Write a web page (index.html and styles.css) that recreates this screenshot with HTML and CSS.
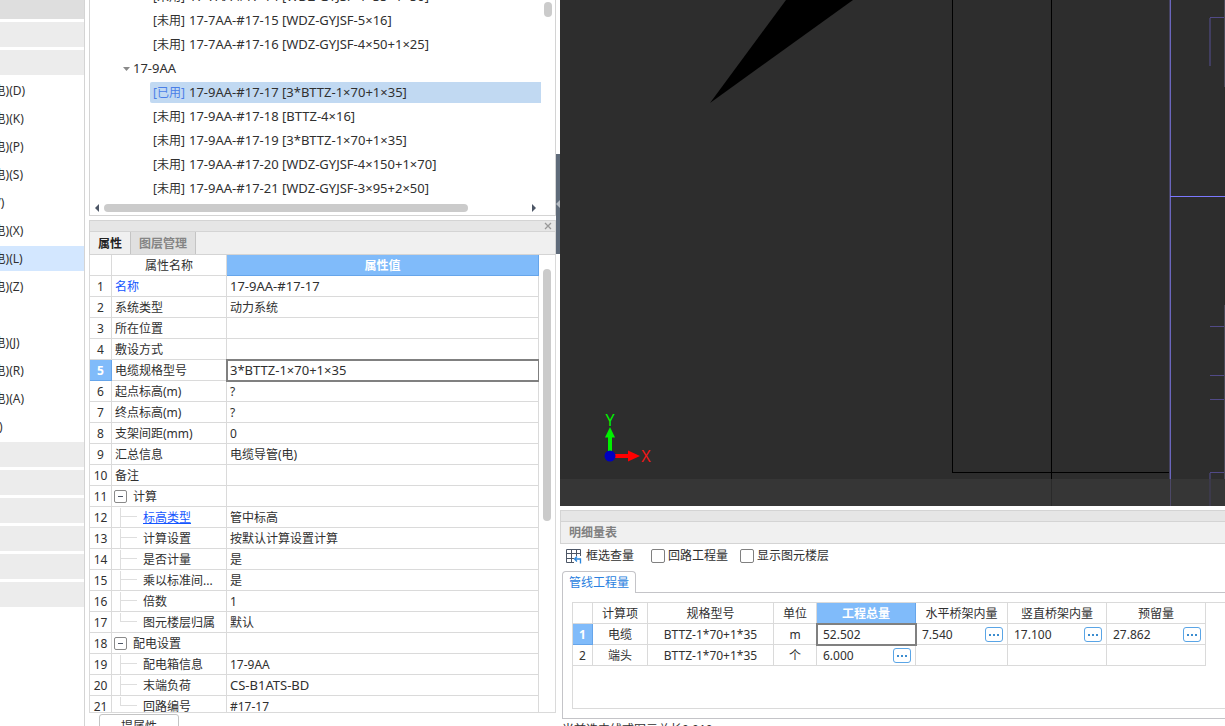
FILE: index.html
```
<!DOCTYPE html>
<html lang="zh-CN">
<head>
<meta charset="utf-8">
<title>明细量表</title>
<link rel="stylesheet" href="styles.css">
</head>
<body>
<div class="app">
  <nav class="sidebar">
    <ul class="nav-list">
      <li class="group pressed"></li>
      <li class="group"></li>
      <li class="group"></li>
      <li>(电)(D)</li>
      <li>(电)(K)</li>
      <li>(电)(P)</li>
      <li>(电)(S)</li>
      <li class="short">(V)</li>
      <li>(电)(X)</li>
      <li class="selected">(电)(L)</li>
      <li>(电)(Z)</li>
      <li></li>
      <li>(电)(J)</li>
      <li>(电)(R)</li>
      <li>(电)(A)</li>
      <li class="short tight">(F)</li>
      <li class="group"></li>
      <li class="group"></li>
      <li class="group"></li>
      <li class="group"></li>
      <li class="group"></li>
      <li class="group"></li>
    </ul>
  </nav>

  <div class="middle">
    <section class="tree-panel">
      <div class="tree-body">
        <ul class="tree">
          <li><span class="state">[未用]</span>17-7AA-#17-14 [WDZ-GYJSF-4×35+1×50]</li>
          <li><span class="state">[未用]</span>17-7AA-#17-15 [WDZ-GYJSF-5×16]</li>
          <li><span class="state">[未用]</span>17-7AA-#17-16 [WDZ-GYJSF-4×50+1×25]</li>
          <li class="parent"><svg width="7" height="4" viewBox="0 0 7 4"><path d="M0 0h7L3.5 4z" fill="#8a8a8a"/></svg>17-9AA</li>
          <li class="selected"><span class="state used">[已用]</span>17-9AA-#17-17 [3*BTTZ-1×70+1×35]</li>
          <li><span class="state">[未用]</span>17-9AA-#17-18 [BTTZ-4×16]</li>
          <li><span class="state">[未用]</span>17-9AA-#17-19 [3*BTTZ-1×70+1×35]</li>
          <li><span class="state">[未用]</span>17-9AA-#17-20 [WDZ-GYJSF-4×150+1×70]</li>
          <li><span class="state">[未用]</span>17-9AA-#17-21 [WDZ-GYJSF-3×95+2×50]</li>
        </ul>
        <div class="vscroll tree-vscroll"><div class="thumb"></div></div>
      </div>
      <div class="hscroll">
        <svg width="4" height="8" viewBox="0 0 4 8"><path d="M4 0v8L0 4z" fill="#4d5666"/></svg>
        <div class="track"><div class="thumb"></div></div>
        <svg width="4" height="8" viewBox="0 0 4 8"><path d="M0 0v8l4-4z" fill="#4d5666"/></svg>
      </div>
    </section>

    <section class="props-panel">
      <header class="dock-title">
        <button class="close" type="button" aria-label="关闭"><svg width="8" height="8" viewBox="0 0 8 8"><path d="M1 1l6 6M7 1L1 7" stroke="#999" stroke-width="1.3" fill="none"/></svg></button>
      </header>
      <div class="dock-tabs">
        <button class="dock-tab active" type="button">属性</button>
        <button class="dock-tab" type="button">图层管理</button>
      </div>
      <div class="props-body">
        <div class="table-clip">
          <table class="grid props">
            <colgroup><col class="c-num"><col class="c-name"><col></colgroup>
            <thead><tr><th></th><th>属性名称</th><th class="hot">属性值</th></tr></thead>
            <tbody>
              <tr><td>1</td><td class="link">名称</td><td class="code">17-9AA-#17-17</td></tr>
              <tr><td>2</td><td>系统类型</td><td>动力系统</td></tr>
              <tr><td>3</td><td>所在位置</td><td></td></tr>
              <tr><td>4</td><td>敷设方式</td><td></td></tr>
              <tr><td class="hot">5</td><td><label for="spec">电缆规格型号</label></td><td class="editing"><input id="spec" class="code" value="3*BTTZ-1×70+1×35"></td></tr>
              <tr><td>6</td><td>起点标高(m)</td><td>?</td></tr>
              <tr><td>7</td><td>终点标高(m)</td><td>?</td></tr>
              <tr><td>8</td><td>支架间距(mm)</td><td>0</td></tr>
              <tr><td>9</td><td>汇总信息</td><td>电缆导管(电)</td></tr>
              <tr><td>10</td><td>备注</td><td></td></tr>
              <tr><td>11</td><td><div class="node"><button class="toggle" type="button" aria-label="折叠"></button>计算</div></td><td></td></tr>
              <tr><td>12</td><td><div class="node child"><i class="branch"></i><a href="#">标高类型</a></div></td><td>管中标高</td></tr>
              <tr><td>13</td><td><div class="node child"><i class="branch"></i>计算设置</div></td><td>按默认计算设置计算</td></tr>
              <tr><td>14</td><td><div class="node child"><i class="branch"></i>是否计量</div></td><td>是</td></tr>
              <tr><td>15</td><td><div class="node child"><i class="branch"></i>乘以标准间...</div></td><td>是</td></tr>
              <tr><td>16</td><td><div class="node child"><i class="branch"></i>倍数</div></td><td>1</td></tr>
              <tr><td>17</td><td><div class="node child"><i class="branch last"></i>图元楼层归属</div></td><td>默认</td></tr>
              <tr><td>18</td><td><div class="node"><button class="toggle" type="button" aria-label="折叠"></button>配电设置</div></td><td></td></tr>
              <tr><td>19</td><td><div class="node child"><i class="branch"></i>配电箱信息</div></td><td>17-9AA</td></tr>
              <tr><td>20</td><td><div class="node child"><i class="branch"></i>末端负荷</div></td><td class="code">CS-B1ATS-BD</td></tr>
              <tr><td>21</td><td><div class="node child"><i class="branch last"></i>回路编号</div></td><td>#17-17</td></tr>
            </tbody>
          </table>
        </div>
        <div class="vscroll props-vscroll"><div class="thumb"></div></div>
      </div>
      <footer class="props-footer"><button type="button">提属性</button></footer>
    </section>
    <button class="splitter" type="button" aria-label="收起"><svg width="4" height="8" viewBox="0 0 4 8"><path d="M4 0v8L0 4z" fill="#b4bac1"/></svg></button>
  </div>

  <main class="work">
    <div class="canvas">
      <svg width="100%" height="100%" shape-rendering="crispEdges">
        <path d="M226 0H293L150 103Z" fill="#000" shape-rendering="auto"/>
        <path d="M392.5 0V472.5H610M491.5 0V479" stroke="#000" fill="none"/>
        <path d="M609.5 0V479" stroke="#454361"/>
        <path d="M610.5 0V479" stroke="#6b66bd"/>
        <path d="M610 196.500H665" stroke="#7b78ff"/>
        <path d="M650 17.500H665M650 326.500H665M650 375.500H665M650 399.500H665M650 472.500H665" stroke="#514a87"/>
        <path d="M650 18V66M650 473V479" stroke="#413e60" stroke-width="2"/>
        <path d="M664.500 0V87M664.500 305V479" stroke="#4a4a58"/>
        <rect x="0" y="479" width="100%" height="100%" fill="#363636"/>
        <path d="M491.500 479V506" stroke="#2a2a2a"/>
        <path d="M610.500 479V506" stroke="#4c4866"/>
        <path d="M650 479V506" stroke="#3c3a4a" stroke-width="2"/>
        <g shape-rendering="auto">
          <path d="M50 456V436" stroke="#00f000" stroke-width="4"/>
          <path d="M45 437.500L50 427L55 437.500Z" fill="#00f000"/>
          <path d="M50 456H70" stroke="#f00" stroke-width="4"/>
          <path d="M68 450.500L80 456L68 461.500Z" fill="#f00"/>
          <circle cx="50" cy="456" r="5.500" fill="#0000c0"/>
        </g>
        <text class="axis" x="50" y="426" fill="#00f000">Y</text>
        <text class="axis" x="86" y="462" fill="#f01818">X</text>
      </svg>
    </div>

    <section class="detail">
      <header class="dock-title"></header>
      <h2>明细量表</h2>
      <div class="toolbar">
        <button type="button" class="tool"><svg width="16" height="16" viewBox="0 0 16 16" fill="none"><path d="M8 14.500H.5V1.500H14.500V8M.5 5.500H14.500M.5 10.500H8M5.500 1V15M10.500 1V8" stroke="#4d5666"/><path d="M11 8.500L8.500 11L11 13.500M9 11H14.500V15.500" stroke="#2a86dd" stroke-width="1.300"/></svg>框选查量</button>
        <label><input type="checkbox">回路工程量</label>
        <label><input type="checkbox">显示图元楼层</label>
      </div>
      <div class="pane-tabs"><button type="button">管线工程量</button></div>
      <div class="pane">
        <div class="frame">
          <table class="grid qty">
            <colgroup><col class="q1"><col class="q2"><col class="q3"><col class="q4"><col class="q5"><col class="q6"><col class="q5"><col class="q5"></colgroup>
            <thead><tr><th></th><th>计算项</th><th>规格型号</th><th>单位</th><th class="hot">工程总量</th><th>水平桥架内量</th><th>竖直桥架内量</th><th>预留量</th></tr></thead>
            <tbody>
              <tr><td class="hot">1</td><td>电缆</td><td>BTTZ-1*70+1*35</td><td>m</td><td class="num editing"><input aria-label="工程总量" value="52.502"></td>
                <td class="num"><div>7.540<button type="button" aria-label="更多"></button></div></td>
                <td class="num"><div>17.100<button type="button" aria-label="更多"></button></div></td>
                <td class="num"><div>27.862<button type="button" aria-label="更多"></button></div></td></tr>
              <tr><td>2</td><td>端头</td><td>BTTZ-1*70+1*35</td><td>个</td>
                <td class="num"><div>6.000<button type="button" aria-label="更多"></button></div></td><td></td><td></td><td></td></tr>
            </tbody>
          </table>
        </div>
      </div>
      <footer class="status">当前选中线式图元总长0.010</footer>
    </section>
  </main>
</div>
</body>
</html>
```
FILE: styles.css
```
* { box-sizing: border-box; }

body {
  margin: 0;
  background: #fff;
  color: #303030;
  font: 12px/20px "Noto Sans", "Noto Sans CJK SC", sans-serif;
}

button, input {
  font: inherit;
  color: inherit;
  margin: 0;
  padding: 0;
  border: 0;
  background: none;
}

ul { list-style: none; margin: 0; padding: 0; }

.code { font-size: 13px; }

.app {
  display: flex;
  height: 100vh;
  overflow: hidden;
}

/* Left navigation */
.sidebar {
  flex: none;
  width: 85px;
  border-right: 1px solid #d4d4d4;
  overflow: hidden;
}
.nav-list {
  display: flex;
  flex-direction: column;
  gap: 3px;
  margin-top: -6px;
}
.nav-list li {
  flex: none;
  height: 25px;
  line-height: 25px;
  text-indent: -10px;
  white-space: nowrap;
}
.nav-list .tight { text-indent: -11px; }
.nav-list .group { background: #ececec; }
.nav-list .pressed { background: #dedede; }
.nav-list .selected { background: #d3e7ff; }

/* Circuit tree */
.middle {
  position: relative;
  flex: none;
  width: 475px;
  padding: 0 4px;
  display: flex;
  flex-direction: column;
}
.tree-panel {
  flex: none;
  border: 1px solid #d4d4d4;
  border-top: 0;
}
.tree-body {
  display: flex;
  height: 200px;
  overflow: hidden;
}
.tree {
  flex: 1;
  margin-top: -16px;
  padding-left: 60px;
  font-size: 13px;
}
.tree li {
  height: 21px;
  margin: 0 0 3px;
  padding-left: 3px;
  line-height: 21px;
  white-space: nowrap;
}
.tree li:first-child { margin-top: 2px; }
.tree .state {
  display: inline-block;
  width: 36px;
  font-size: 12px;
}
.tree .used { color: #4a7fe8; }
.tree .selected {
  background: #c1d9f2;
  border-radius: 2px 0 0 2px;
}
.tree .parent {
  display: flex;
  align-items: center;
  gap: 3px;
  margin-left: -30px;
}
.thumb { background: #cbcbcb; border-radius: 4px; }
.vscroll {
  flex: none;
  display: flex;
  justify-content: center;
  width: 14px;
}
.vscroll .thumb { width: 8px; }
.tree-vscroll { padding-top: 2px; }
.tree-vscroll .thumb { height: 15px; }
.hscroll {
  display: flex;
  align-items: center;
  gap: 5px;
  height: 15px;
  padding: 0 19px 0 5px;
}
.hscroll .track { flex: 1; }
.hscroll .thumb { width: 86%; height: 8px; }

/* Property dock */
.props-panel {
  flex: 1;
  min-height: 0;
  margin-top: 4px;
  display: flex;
  flex-direction: column;
}
.dock-title {
  flex: none;
  display: flex;
  justify-content: flex-end;
  align-items: center;
  height: 12px;
  padding-right: 3px;
  background: #e6e6e6;
  border: 1px solid #d4d4d4;
}
.close { display: flex; }
.dock-tabs {
  flex: none;
  display: flex;
  height: 23px;
  background: #f0f0f0;
  border: 1px solid #d4d4d4;
  border-top: 0;
}
.dock-tab {
  padding: 1px 8px 0;
  background: #e0e0e0;
  color: #858585;
  border-right: 1px solid #c4c4c4;
  font-weight: 700;
}
.dock-tab.active {
  background: #f0f0f0;
  color: #222;
}
.props-body {
  flex: 1;
  min-height: 0;
  display: flex;
  border: 1px solid #dadada;
  border-top: 0;
}
.table-clip { flex: 1; overflow: hidden; }
.props-vscroll { width: 16px; padding-top: 14px; }
.props-vscroll .thumb { height: 252px; }

.grid {
  border-collapse: separate;
  border-spacing: 0;
  table-layout: fixed;
}
.grid th, .grid td {
  height: 21px;
  padding: 1px 3px 0;
  border: solid #dadada;
  border-width: 0 1px 1px 0;
  font-weight: 400;
  line-height: 19px;
  white-space: nowrap;
}
.grid .hot {
  background: #80bbfa;
  color: #fff;
  font-weight: 700;
  border-color: #66a5ea;
}
.grid input {
  display: block;
  width: 100%;
  height: 19px;
  outline: 0;
}
.grid .editing { outline: 2px solid #808080; outline-offset: -1px; }
.props { width: 100%; }
.props td:first-child { padding: 1px 0 0; text-align: center; }
.grid td.code { padding-top: 0; }
.c-num { width: 22px; }
.c-name { width: 115px; }
.link, .grid a { color: #1456ff; }
.node {
  display: flex;
  align-items: center;
  gap: 6px;
  height: 19px;
}
.node.child { padding-left: 5px; }
.toggle {
  flex: none;
  width: 13px;
  height: 13px;
  margin-left: -1px;
  border: 1px solid #8a8a8a;
  border-radius: 2px;
  background: linear-gradient(#4d5666, #4d5666) center / 5px 1px no-repeat;
}
.branch {
  flex: none;
  width: 17px;
  height: 19px;
  background:
    linear-gradient(#dedede, #dedede) 0 0 / 1px 100% no-repeat,
    linear-gradient(#dedede, #dedede) 0 8px / 100% 1px no-repeat;
}
.branch.last { background-size: 1px 8px, 100% 1px; }
.props-footer {
  flex: none;
  height: 13px;
  padding: 1px 0 0 10px;
  overflow: hidden;
}
.props-footer button {
  width: 80px;
  height: 26px;
  border: 1px solid #c4c4c4;
  border-radius: 3px;
}
.splitter {
  position: absolute;
  right: 0;
  top: 154px;
  width: 4px;
  height: 100px;
  display: flex;
  align-items: center;
  background: #5f6b7a;
}

/* Drawing area */
.work {
  flex: 1;
  min-width: 0;
  display: flex;
  flex-direction: column;
}
.canvas {
  flex: 1;
  min-height: 0;
  background: #2d2d2d;
  overflow: hidden;
}
.canvas svg { display: block; }
.axis { font: 16px "Noto Sans", sans-serif; text-anchor: middle; }

/* Quantity details */
.detail {
  flex: none;
  padding-top: 4px;
}
.detail .dock-title { border-right: 0; }
h2 {
  margin: 0;
  height: 22px;
  padding-left: 8px;
  background: #f0f0f0;
  border: 1px solid #d4d4d4;
  border-width: 0 0 1px 1px;
  color: #808080;
  font-size: 12px;
  line-height: 22px;
  font-weight: 700;
}
.toolbar {
  display: flex;
  align-items: center;
  gap: 17px;
  height: 23px;
  padding-left: 6px;
}
.tool, .toolbar label {
  display: flex;
  align-items: center;
  gap: 4px;
}
.toolbar label { gap: 3px; }
.toolbar label + label { margin-left: -5px; }
.toolbar input {
  appearance: none;
  width: 14px;
  height: 14px;
  border: 1px solid #808080;
  border-radius: 2px;
}
.pane-tabs {
  display: flex;
  margin-top: 4px;
  padding-left: 2px;
}
.pane-tabs::after {
  content: "";
  flex: 1;
  border-bottom: 1px solid #c4c4c8;
}
.pane-tabs button {
  height: 22px;
  padding: 0 6px;
  border: 1px solid #c4c4c8;
  border-bottom: 0;
  border-radius: 4px 4px 0 0;
  color: #2a7fe0;
}
.pane {
  margin-left: 2px;
  padding: 9px 0 9px 9px;
  border: 1px solid #c4c4c8;
  border-width: 0 0 1px 1px;
}
.frame {
  height: 107px;
  border: 1px solid #dadada;
  border-right: 0;
  overflow: hidden;
}
.qty { width: 633px; text-align: center; }
.q1 { width: 20px; }
.q2 { width: 55px; }
.q3 { width: 126px; }
.q4 { width: 43px; }
.q5 { width: 99px; }
.q6 { width: 92px; }
.qty .num { padding: 1px 4px 0 6px; text-align: left; }
.num div {
  display: flex;
  align-items: center;
  justify-content: space-between;
}
.num button {
  width: 18px;
  height: 15px;
  border: 1px solid #5aa5e6;
  border-radius: 3px;
  background:
    linear-gradient(#3c8dd0, #3c8dd0) 3px 6px / 2px 2px no-repeat,
    linear-gradient(#3c8dd0, #3c8dd0) 7px 6px / 2px 2px no-repeat,
    linear-gradient(#3c8dd0, #3c8dd0) 11px 6px / 2px 2px no-repeat;
}
.status {
  height: 7px;
  padding: 1px 0 0 2px;
  overflow: hidden;
}
```
